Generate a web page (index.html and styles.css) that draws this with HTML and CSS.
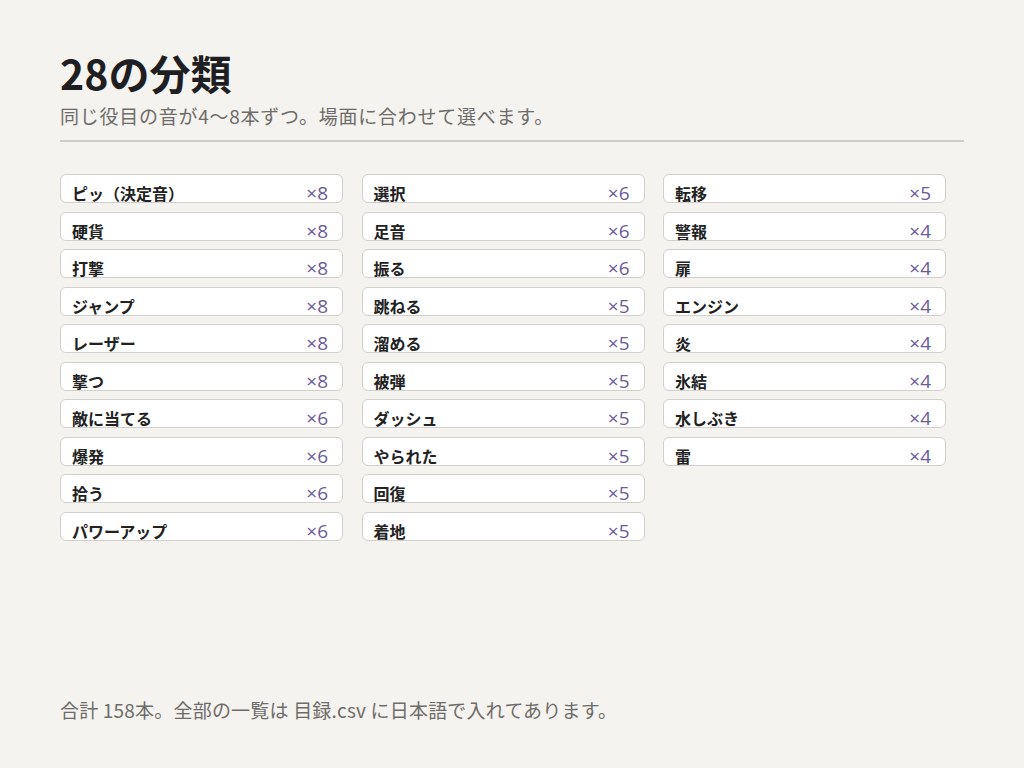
FILE: index.html
```html
<!DOCTYPE html>
<html lang="ja">
<head>
<meta charset="utf-8">
<title>28の分類</title>
<link rel="stylesheet" href="styles.css">
</head>
<body>
<main class="page">
  <header class="head">
    <h1 class="title">28の分類</h1>
    <p class="lead">同じ役目の音が4〜8本ずつ。場面に合わせて選べます。</p>
  </header>
  <ul class="grid">
    <li class="card"><span class="name">ピッ（決定音）</span><span class="count">×8</span></li>
    <li class="card"><span class="name">硬貨</span><span class="count">×8</span></li>
    <li class="card"><span class="name">打撃</span><span class="count">×8</span></li>
    <li class="card"><span class="name">ジャンプ</span><span class="count">×8</span></li>
    <li class="card"><span class="name">レーザー</span><span class="count">×8</span></li>
    <li class="card"><span class="name">撃つ</span><span class="count">×8</span></li>
    <li class="card"><span class="name">敵に当てる</span><span class="count">×6</span></li>
    <li class="card"><span class="name">爆発</span><span class="count">×6</span></li>
    <li class="card"><span class="name">拾う</span><span class="count">×6</span></li>
    <li class="card"><span class="name">パワーアップ</span><span class="count">×6</span></li>
    <li class="card"><span class="name">選択</span><span class="count">×6</span></li>
    <li class="card"><span class="name">足音</span><span class="count">×6</span></li>
    <li class="card"><span class="name">振る</span><span class="count">×6</span></li>
    <li class="card"><span class="name">跳ねる</span><span class="count">×5</span></li>
    <li class="card"><span class="name">溜める</span><span class="count">×5</span></li>
    <li class="card"><span class="name">被弾</span><span class="count">×5</span></li>
    <li class="card"><span class="name">ダッシュ</span><span class="count">×5</span></li>
    <li class="card"><span class="name">やられた</span><span class="count">×5</span></li>
    <li class="card"><span class="name">回復</span><span class="count">×5</span></li>
    <li class="card"><span class="name">着地</span><span class="count">×5</span></li>
    <li class="card"><span class="name">転移</span><span class="count">×5</span></li>
    <li class="card"><span class="name">警報</span><span class="count">×4</span></li>
    <li class="card"><span class="name">扉</span><span class="count">×4</span></li>
    <li class="card"><span class="name">エンジン</span><span class="count">×4</span></li>
    <li class="card"><span class="name">炎</span><span class="count">×4</span></li>
    <li class="card"><span class="name">氷結</span><span class="count">×4</span></li>
    <li class="card"><span class="name">水しぶき</span><span class="count">×4</span></li>
    <li class="card"><span class="name">雷</span><span class="count">×4</span></li>
  </ul>
  <footer class="foot">合計 158本。全部の一覧は 目録.csv に日本語で入れてあります。</footer>
</main>
</body>
</html>
```

FILE: styles.css
```css
* { box-sizing: border-box; }
html, body { margin: 0; padding: 0; }
body {
  background: #f4f3ef;
  font-family: "Noto Sans CJK JP", "Noto Sans", sans-serif;
  color: #222;
  width: 1024px;
  height: 768px;
  overflow: hidden;
}
.page {
  height: 768px;
  padding: 46px 60px 0 60px;
  display: flex;
  flex-direction: column;
}
.head {
  border-bottom: 2px solid #cfcdca;
  padding-bottom: 9px;
}
.title {
  margin: 0;
  font-size: 41px;
  line-height: 52px;
  font-weight: 700;
  color: #1f1e22;
}
.lead {
  margin: 3px 0 0 0;
  font-size: 19px;
  line-height: 30px;
  letter-spacing: 0.75px;
  color: #6e6c6a;
}
.grid {
  list-style: none;
  margin: 32px 0 0 0;
  padding: 0;
  display: grid;
  grid-template-columns: repeat(3, 283px);
  grid-template-rows: repeat(10, 29px);
  grid-auto-flow: column;
  column-gap: 18.5px;
  row-gap: 8.5px;
}
.card {
  background: #fff;
  border: 1px solid #d2d0cc;
  border-radius: 6px;
  height: 29px;
  padding: 8px 14px 0 11px;
  display: flex;
  justify-content: space-between;
  align-items: flex-start;
}
.name {
  font-size: 16px;
  line-height: 20px;
  font-weight: 700;
  color: #222;
}
.count {
  font-size: 19px;
  line-height: 20px;
  color: #6a5b9c;
  font-family: "Open Sans", "Noto Sans", sans-serif;
}
.foot {
  margin-top: auto;
  margin-bottom: 43px;
  font-size: 19px;
  line-height: 30px;
  letter-spacing: 0.2px;
  color: #6e6c6a;
}
```
